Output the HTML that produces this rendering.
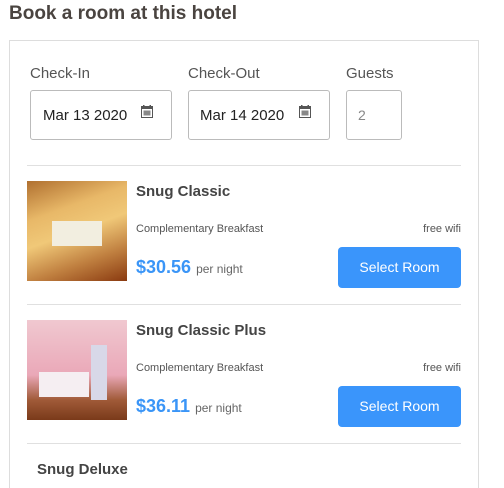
<!DOCTYPE html>
<html><head><style>
*{margin:0;padding:0;box-sizing:border-box}
html,body{width:504px;height:488px;overflow:hidden}
body{background:#fff;font-family:"Liberation Sans",sans-serif;color:#444;position:relative}
.a{position:absolute;white-space:nowrap}
.h{left:9px;top:3px;font-size:19px;font-weight:bold;color:#4a4440}
.box{left:9px;top:40px;width:470px;height:460px;border:1px solid #ddd;border-bottom:none}
.lbl{font-size:15px;color:#555;top:65px}
.inp{top:90px;height:50px;border:1px solid #bbb;border-radius:3px}
.val{font-size:15px;color:#222;top:107px}
.hr{left:27px;width:434px;height:1px;background:#e0e0e0}
.name{font-size:15px;font-weight:bold;color:#444;left:136px}
.sm{font-size:11px;color:#555}
.price{font-size:18px;font-weight:bold;color:#3a95f7;left:136px}
.pn{font-size:12px;color:#666}
.btn{left:338px;width:123px;height:41px;background:#3a95fb;border-radius:4px;color:#fff;font-size:14px;text-align:center;line-height:41px}
.img{left:27px;width:100px;height:100px}
</style></head><body>
<div class="a h">Book a room at this hotel</div>
<div class="a box"></div>
<div class="a lbl" style="left:30px">Check-In</div>
<div class="a lbl" style="left:188px">Check-Out</div>
<div class="a lbl" style="left:346px">Guests</div>
<div class="a inp" style="left:30px;width:142px"></div>
<div class="a inp" style="left:188px;width:142px"></div>
<div class="a inp" style="left:346px;width:56px"></div>
<div class="a val" style="left:43px">Mar 13 2020</div>
<div class="a val" style="left:200px">Mar 14 2020</div>
<div class="a val" style="left:358px;color:#888;font-size:14px">2</div>
<svg class="a" style="left:141px;top:105px" width="12" height="13" viewBox="0 0 12 13"><rect x="2" y="0" width="1.5" height="3" fill="#555"/><rect x="8.5" y="0" width="1.5" height="3" fill="#555"/><rect x="0.5" y="1.5" width="11" height="11" fill="none" stroke="#555"/><rect x="0.5" y="1.5" width="11" height="2.5" fill="#555"/><g fill="#888"><rect x="2.5" y="5.5" width="7" height="5"/></g></svg>
<svg class="a" style="left:299px;top:105px" width="12" height="13" viewBox="0 0 12 13"><rect x="2" y="0" width="1.5" height="3" fill="#555"/><rect x="8.5" y="0" width="1.5" height="3" fill="#555"/><rect x="0.5" y="1.5" width="11" height="11" fill="none" stroke="#555"/><rect x="0.5" y="1.5" width="11" height="2.5" fill="#555"/><g fill="#888"><rect x="2.5" y="5.5" width="7" height="5"/></g></svg>
<div class="a hr" style="top:165px"></div>
<div class="a img" style="top:181px;background:linear-gradient(160deg,#b07030 0%,#e8b868 30%,#f0c878 50%,#c08040 75%,#8a3a10 100%)"><div style="position:absolute;left:25px;top:40px;width:50px;height:25px;background:#f2eee0"></div></div>
<div class="a name" style="top:183px">Snug Classic</div>
<div class="a sm" style="left:136px;top:223px">Complementary Breakfast</div>
<div class="a sm" style="right:43px;top:223px">free wifi</div>
<div class="a price" style="top:257px">$30.56 <span class="pn" style="font-weight:normal;color:#666">per night</span></div>
<div class="a btn" style="top:247px">Select Room</div>
<div class="a hr" style="top:304px"></div>
<div class="a img" style="top:320px;background:linear-gradient(180deg,#f0c8d0 0%,#eaa8b8 55%,#a05a38 80%,#7a3a1a 100%)"><div style="position:absolute;left:12px;top:52px;width:50px;height:25px;background:#f5eef2"></div><div style="position:absolute;left:64px;top:25px;width:16px;height:55px;background:#d8d8e8"></div></div>
<div class="a name" style="top:322px">Snug Classic Plus</div>
<div class="a sm" style="left:136px;top:362px">Complementary Breakfast</div>
<div class="a sm" style="right:43px;top:362px">free wifi</div>
<div class="a price" style="top:396px">$36.11 <span class="pn" style="font-weight:normal;color:#666">per night</span></div>
<div class="a btn" style="top:386px">Select Room</div>
<div class="a hr" style="top:443px"></div>
<div class="a name" style="left:37px;top:461px">Snug Deluxe</div>
</body></html>
